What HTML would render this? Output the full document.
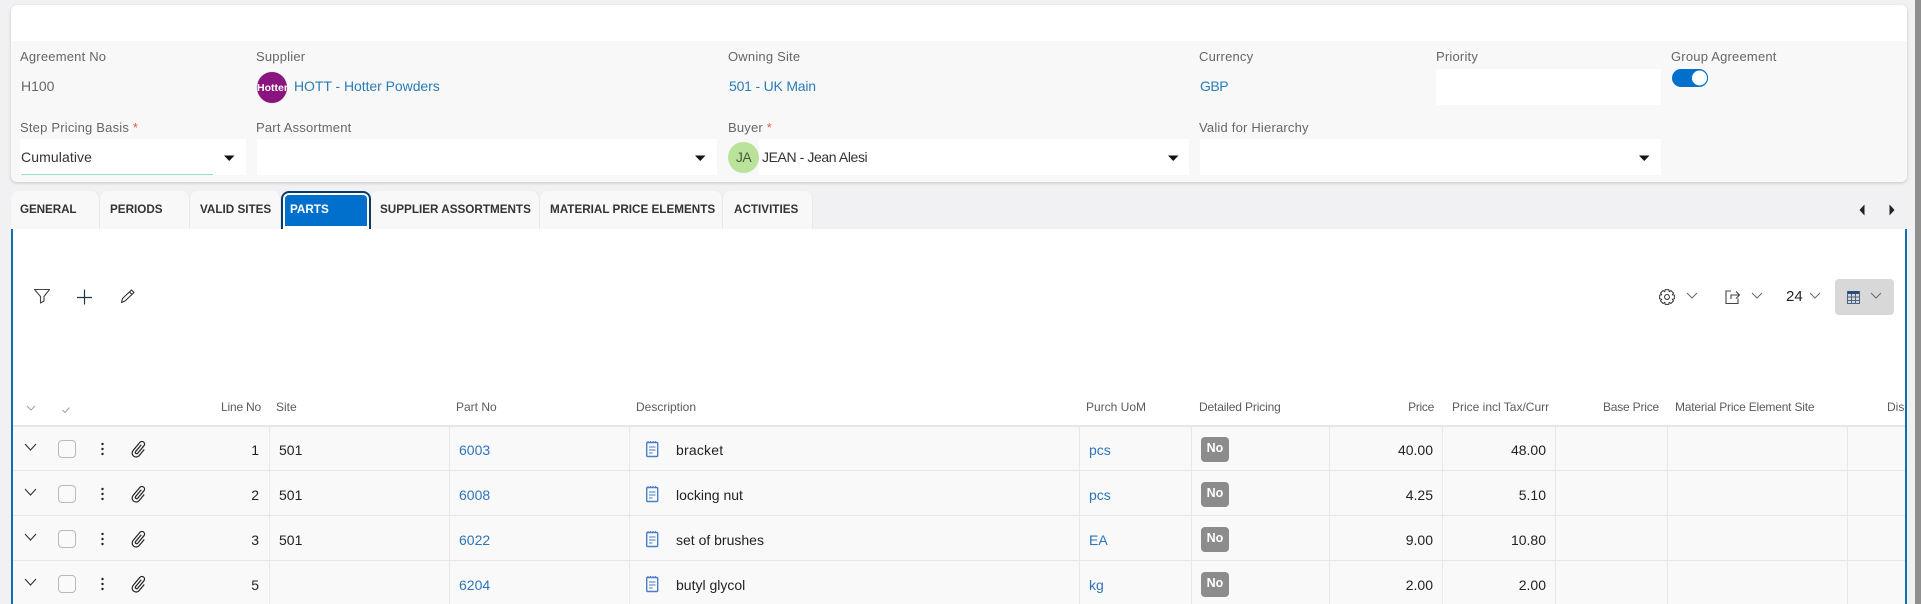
<!DOCTYPE html>
<html lang="en"><head><meta charset="utf-8"><title>Agreement</title>
<style>
html,body{margin:0;padding:0;width:1921px;height:604px;overflow:hidden;background:#f1f0f3}
body{position:relative;font-family:"Liberation Sans",sans-serif;color:#333}
div{position:absolute;box-sizing:border-box}
.t{white-space:nowrap;line-height:20px;height:20px}
.l{font-size:13px;color:#666;letter-spacing:.2px}
.v{font-size:14px}
.a{color:#2a7db5}
.w{background:#fff}
.req{color:#e0584f}
.tab{top:191px;height:38px;background:#f8f8f9;border-radius:8px 8px 0 0;border-right:1px solid #e9e9eb}
.tt{font-size:11.7px;font-weight:bold;color:#333;top:200px}
.h{font-size:12px;color:#5c5c5c;top:397px}
.s{letter-spacing:-.2px}
.ln{background:#e8e8e8;width:1px;top:425px;height:179px}
.hl{left:13px;width:1892px;height:1px;background:#e6e6e6}
.no{left:1201px;width:28px;height:25px;background:#8c8c8c;border-radius:4px;color:#fff;font-weight:bold;font-size:12.5px;text-align:center;line-height:23px}
.cb{left:58px;width:18px;height:18px;border:1px solid #b9b9b9;border-radius:4px;background:#fafafa}
.link{color:#2f74b8}
.d{color:#222}
</style></head><body>
<!-- scrollbar -->
<div style="left:1915px;top:0;width:6px;height:604px;background:#8f8f8f"></div>
<!-- card -->
<div style="left:11px;top:5px;width:1896px;height:177px;background:#f8f8f9;border-radius:6px;box-shadow:0 1px 3px rgba(0,0,0,.18);overflow:hidden">
  <div style="left:0;top:0;width:100%;height:36px;background:#fff"></div>
</div>
<div class="t l" style="left:20px;top:47px">Agreement No</div>
<div class="t l" style="left:256px;top:47px">Supplier</div>
<div class="t l" style="left:728px;top:47px">Owning Site</div>
<div class="t l" style="left:1199px;top:47px">Currency</div>
<div class="t l" style="left:1436px;top:47px">Priority</div>
<div class="t l" style="left:1671px;top:47px">Group Agreement</div>
<div class="t v" style="left:21px;top:76px;color:#666">H100</div>
<div style="left:257px;top:72px;width:30px;height:31px;border-radius:50%;background:#8a157f;overflow:hidden;box-shadow:0 0 0 .5px #ddd"></div>
<div class="t" style="left:257px;top:78px;width:30px;text-align:center;color:#fff;font-weight:bold;font-size:10.5px">Hotter</div>
<div class="t v a" style="left:294px;top:76px;letter-spacing:-.05px">HOTT - Hotter Powders</div>
<div class="t v a" style="left:729px;top:76px;letter-spacing:-.2px">501 - UK Main</div>
<div class="t v a" style="left:1200px;top:76px;letter-spacing:-.5px">GBP</div>
<div class="w" style="left:1436px;top:69px;width:225px;height:36px"></div>
<div style="left:1672px;top:69px;width:36px;height:18px;border-radius:9px;background:#0070cc"></div>
<div style="left:1691px;top:70px;width:16px;height:16px;border-radius:50%;background:#fff"></div>
<div class="t l" style="left:20px;top:118px">Step Pricing Basis <span class="req">*</span></div>
<div class="t l" style="left:256px;top:118px">Part Assortment</div>
<div class="t l" style="left:728px;top:118px">Buyer <span class="req">*</span></div>
<div class="t l" style="left:1199px;top:118px">Valid for Hierarchy</div>
<div class="w" style="left:20px;top:139px;width:226px;height:36px"></div>
<div style="left:21px;top:174px;width:192px;height:1px;background:#9bdcc4"></div>
<div class="w" style="left:257px;top:139px;width:460px;height:36px"></div>
<div class="w" style="left:759px;top:139px;width:430px;height:36px"></div>
<div class="w" style="left:1200px;top:139px;width:461px;height:36px"></div>
<div class="t v" style="left:21px;top:147px;letter-spacing:.1px">Cumulative</div>
<div style="left:728px;top:142px;width:31px;height:31px;border-radius:50%;background:#b9e39a"></div>
<div class="t" style="left:728px;top:147px;width:31px;text-align:center;font-size:14px;color:#4a5a3a;letter-spacing:-.5px">JA</div>
<div class="t v" style="left:762px;top:147px;letter-spacing:-.4px">JEAN - Jean Alesi</div>
<!-- tabs -->
<div class="tab" style="left:11px;width:89px"></div>
<div class="tab" style="left:100px;width:90px"></div>
<div class="tab" style="left:190px;width:91px"></div>
<div class="tab" style="left:371px;width:169px"></div>
<div class="tab" style="left:540px;width:183px"></div>
<div class="tab" style="left:723px;width:90px"></div>
<!-- panel -->
<div style="left:11px;top:229px;width:1896px;height:375px;background:#fff;border-left:2px solid #0f6fae;border-right:2px solid #0f6fae"></div>
<div style="left:281px;top:191px;width:90px;height:38px;background:#0c3a68;border-radius:8px 8px 0 0"></div>
<div style="left:283px;top:193px;width:86px;height:36px;background:#fff;border-radius:6px 6px 0 0"></div>
<div style="left:285px;top:195px;width:82px;height:31px;background:#0070cc;border-radius:4px 4px 0 0"></div>
<div class="t tt" style="left:20px;letter-spacing:-.1px">GENERAL</div>
<div class="t tt" style="left:110px">PERIODS</div>
<div class="t tt" style="left:200px">VALID SITES</div>
<div class="t tt" style="left:290px;color:#fff">PARTS</div>
<div class="t tt" style="left:380px">SUPPLIER ASSORTMENTS</div>
<div class="t tt" style="left:550px">MATERIAL PRICE ELEMENTS</div>
<div class="t tt" style="left:734px">ACTIVITIES</div>
<!-- rows -->
<div style="left:13px;top:425px;width:1892px;height:179px;background:#f9f9f9"></div>
<div class="hl" style="top:425px;height:2px"></div>
<div class="hl" style="top:470px"></div>
<div class="hl" style="top:515px"></div>
<div class="hl" style="top:560px"></div>
<div class="ln" style="left:269px"></div><div class="ln" style="left:449px"></div><div class="ln" style="left:629px"></div>
<div class="ln" style="left:1079px"></div><div class="ln" style="left:1191px"></div><div class="ln" style="left:1329px"></div>
<div class="ln" style="left:1442px"></div><div class="ln" style="left:1555px"></div><div class="ln" style="left:1667px"></div><div class="ln" style="left:1847px"></div>
<!-- header text -->
<div class="t h s" style="right:1660px;letter-spacing:-.2px">Line No</div>
<div class="t h" style="left:276px">Site</div>
<div class="t h" style="left:456px">Part No</div>
<div class="t h" style="left:636px">Description</div>
<div class="t h" style="left:1086px">Purch UoM</div>
<div class="t h s" style="left:1199px;letter-spacing:-.15px">Detailed Pricing</div>
<div class="t h" style="right:487px;letter-spacing:-.3px">Price</div>
<div class="t h" style="left:1452px">Price incl Tax/Curr</div>
<div class="t h" style="right:262px;letter-spacing:-.2px">Base Price</div>
<div class="t h s" style="left:1675px">Material Price Element Site</div>
<div style="left:1880px;top:397px;width:25px;height:20px;overflow:hidden"><div class="t h" style="left:7px;top:0">Discount</div></div>
<!-- row 1 -->
<div class="cb" style="top:440px"></div>
<div class="t v d" style="right:1662px;top:440px">1</div>
<div class="t v d" style="left:279px;top:440px">501</div>
<div class="t v link" style="left:459px;top:440px">6003</div>
<div class="t v d" style="left:676px;top:440px;letter-spacing:.2px">bracket</div>
<div class="t v link" style="left:1089px;top:440px">pcs</div>
<div class="no" style="top:437px">No</div>
<div class="t v d" style="right:488px;top:440px">40.00</div>
<div class="t v d" style="right:375px;top:440px">48.00</div>
<!-- row 2 -->
<div class="cb" style="top:485px"></div>
<div class="t v d" style="right:1662px;top:485px">2</div>
<div class="t v d" style="left:279px;top:485px">501</div>
<div class="t v link" style="left:459px;top:485px">6008</div>
<div class="t v d" style="left:676px;top:485px">locking nut</div>
<div class="t v link" style="left:1089px;top:485px">pcs</div>
<div class="no" style="top:482px">No</div>
<div class="t v d" style="right:488px;top:485px">4.25</div>
<div class="t v d" style="right:375px;top:485px">5.10</div>
<!-- row 3 -->
<div class="cb" style="top:530px"></div>
<div class="t v d" style="right:1662px;top:530px">3</div>
<div class="t v d" style="left:279px;top:530px">501</div>
<div class="t v link" style="left:459px;top:530px">6022</div>
<div class="t v d" style="left:676px;top:530px">set of brushes</div>
<div class="t v link" style="left:1089px;top:530px">EA</div>
<div class="no" style="top:527px">No</div>
<div class="t v d" style="right:488px;top:530px">9.00</div>
<div class="t v d" style="right:375px;top:530px">10.80</div>
<!-- row 4 -->
<div class="cb" style="top:575px"></div>
<div class="t v d" style="right:1662px;top:575px">5</div>
<div class="t v link" style="left:459px;top:575px">6204</div>
<div class="t v d" style="left:676px;top:575px">butyl glycol</div>
<div class="t v link" style="left:1089px;top:575px">kg</div>
<div class="no" style="top:572px">No</div>
<div class="t v d" style="right:488px;top:575px">2.00</div>
<div class="t v d" style="right:375px;top:575px">2.00</div>
<!-- toolbar -->
<div style="left:1835px;top:279px;width:59px;height:36px;background:#d8d8d8;border-radius:4px"></div>
<div class="t" style="left:1786px;top:287px;font-size:15px;color:#222">24</div>
<!-- icons -->
<svg style="position:absolute;left:0;top:0" width="1921" height="604" viewBox="0 0 1921 604" fill="none">
<defs>
<g id="row">
  <path d="M25 444l5.500 6 5.500-6" stroke="#333" stroke-width="1.100"/>
  <circle cx="102.500" cy="444" r="1.200" fill="#222"/><circle cx="102.500" cy="449" r="1.200" fill="#222"/><circle cx="102.500" cy="454" r="1.200" fill="#222"/>
  <g transform="translate(139.500 449) rotate(40) scale(.88)"><path d="M-1.500-5V5a1.500 1.500 0 0 0 3 0V-6a3 3 0 0 0-6 0V6a4.500 4.500 0 0 0 9 0V-3" stroke="#222" stroke-width="1.400"/></g>
  <rect x="646.700" y="442.500" width="11" height="14" rx="1" stroke="#4a7fc7" stroke-width="1.400"/>
  <path d="M648 441v2M650.500 441v2M653 441v2M655.500 441v2" stroke="#4a7fc7"/>
  <path d="M649 447h6.500M649 450h6.500M649 453h3.500" stroke="#4a7fc7" stroke-width="1.100"/>
</g>
<path id="chev" d="M0 0l5 5 5-5" stroke="#667" stroke-width="1"/>
<path id="tri" d="M0 0h10.500L5.250 5.500Z" fill="#111"/>
</defs>
<use href="#tri" x="224" y="155.500"/><use href="#tri" x="695" y="155.500"/><use href="#tri" x="1168" y="155.500"/><use href="#tri" x="1639" y="155.500"/>
<circle cx="1699.500" cy="78" r="8" fill="#fff" stroke="#0070cc" stroke-width="1"/>
<path d="M1864.500 204.500v11l-5-5.500ZM1889.500 204.500v11l5-5.500Z" fill="#222"/>
<!-- left tools -->
<path d="M34.500 289.500H49.500L44 296.500V301L40.500 303V296.500Z" stroke="#444" stroke-width="1.100" stroke-linejoin="round"/>
<path d="M77 297.500H92M84.500 289.500V304.500" stroke="#1d3a4a" stroke-width="1.200"/>
<path d="M121.500 302.500l1-4 9-8.500 2.500 2.500-9 8.500ZM129.500 292l2.500 2.500" stroke="#333" stroke-width="1.100" stroke-linejoin="round"/>
<!-- right tools -->
<g transform="translate(1667 297) scale(.95)" stroke="#333" stroke-width="1.050" stroke-linejoin="round">
<path d="M5.540-2.300 7.760-1.940 7.760 1.940 5.540 2.300 6.860 4.120 4.120 6.860 2.300 5.540 1.940 7.760-1.940 7.760-2.300 5.540-4.120 6.860-6.860 4.120-5.540 2.300-7.760 1.940-7.760-1.940-5.540-2.300-6.860-4.120-4.120-6.860-2.300-5.540-1.940-7.760 1.940-7.760 2.300-5.540 4.120-6.860 6.860-4.120Z"/>
<circle r="2.600"/></g>
<use href="#chev" x="1687" y="293"/>
<path d="M1731 291H1726V303.500H1738V298.500M1731 299V295H1739M1736 291.500l3.500 3.500-3.500 3.500" stroke="#444" stroke-width="1.100"/>
<use href="#chev" x="1752" y="293"/><use href="#chev" x="1810" y="293"/>
<rect x="1847" y="291" width="13" height="3" fill="#2a4a7a"/>
<path d="M1847.500 291V303.500H1859.500V291M1847.500 297h12M1847.500 300.500h12M1851.500 294v9.500M1855.500 294v9.500" stroke="#4a6288" stroke-width="1"/>
<use href="#chev" x="1871" y="293"/>
<path d="M27 406l4 4 4-4M62.500 410l2.500 2.500 4.500-5" stroke="#a0a0a0" stroke-width="1"/>
<use href="#row"/><use href="#row" y="45"/><use href="#row" y="90"/><use href="#row" y="135"/>
</svg>
</body></html>
